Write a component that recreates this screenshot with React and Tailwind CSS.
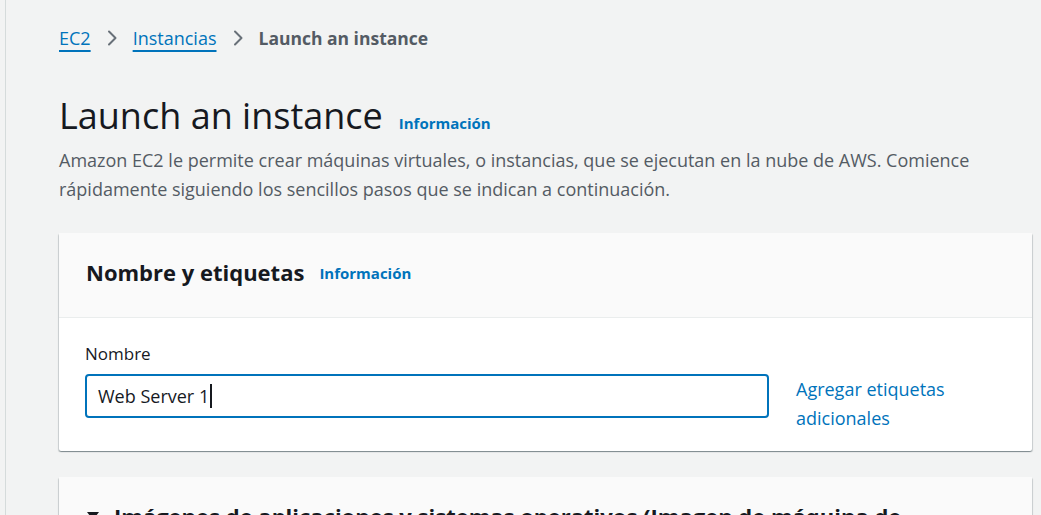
import React from 'react'

const font = { fontFamily: '"Open Sans", "Noto Sans", Arial, sans-serif' }

const Chevron = () => (
  <svg className="w-[14px] h-[18px] text-[#687078]" viewBox="0 0 14 18" fill="none" stroke="currentColor">
    <path d="M4 2.5l6.5 6.5L4 15.5" strokeWidth={2} strokeLinecap="round" strokeLinejoin="round" />
  </svg>
)

const Card = ({ children, className = '' }) => (
  <div className={`bg-white rounded-[2px] shadow-[0_1px_1px_0_rgba(0,28,36,0.3),1px_1px_1px_0_rgba(0,28,36,0.15),-1px_1px_1px_0_rgba(0,28,36,0.15)] ${className}`}>
    {children}
  </div>
)

export default function App() {
  return (
    <div className="flex h-[515px] overflow-hidden bg-[#f2f3f3]" style={font}>
      <div className="w-[5px] shrink-0" />
      <main className="flex-1 border-l border-[#d5dbdb] pl-[53px] pr-[9px]">
        {/* Breadcrumb */}
        <nav className="flex items-center gap-[14px] pt-[27px] text-[18px] leading-[22px]">
          <a className="text-[#0073bb] underline decoration-[1.5px] underline-offset-[5px]">EC2</a>
          <Chevron />
          <a className="text-[#0073bb] underline decoration-[1.5px] underline-offset-[5px]">Instancias</a>
          <Chevron />
          <span className="font-bold text-[17.5px] text-[#545b64]">Launch an instance</span>
        </nav>

        {/* Title */}
        <div className="mt-[45px] flex items-baseline gap-[16px]">
          <h1 className="text-[36px] leading-[44px] text-[#16191f] font-normal">Launch an instance</h1>
          <a className="text-[15px] font-bold text-[#0073bb]">Información</a>
        </div>
        <p className="mt-[8px] text-[18px] leading-[29px] text-[#545b64]">
          Amazon EC2 le permite crear máquinas virtuales, o instancias, que se ejecutan en la nube de AWS. Comience
          <br />
          rápidamente siguiendo los sencillos pasos que se indican a continuación.
        </p>

        {/* Nombre y etiquetas */}
        <Card className="mt-[29px]">
          <div className="bg-[#fafafa] border-b border-[#eaeded] h-[85px] px-[27px] pb-[6px] flex items-center gap-[15px]">
            <h2 className="text-[22px] font-bold text-[#16191f]">Nombre y etiquetas</h2>
            <a className="text-[15px] font-bold text-[#0073bb] mt-[3px]">Información</a>
          </div>
          <div className="px-[26px] pt-[24px] pb-[18px]">
            <label className="block text-[17px] leading-[24px] text-[#16191f]">Nombre</label>
            <div className="mt-[8px] flex items-start gap-[27px]">
              <div className="w-[684px] h-[44px] shrink-0 border-2 border-[#0073bb] rounded-[4px] px-[11px] flex items-center text-[18px] text-[#16191f]">
                Web Server 1
                <span className="inline-block w-[2px] h-[24px] bg-[#16191f] ml-[1px]" />
              </div>
              <a className="text-[18px] leading-[29px] text-[#0073bb] pt-[1px]">
                Agregar etiquetas
                <br />
                adicionales
              </a>
            </div>
          </div>
        </Card>

        {/* Imágenes de aplicaciones */}
        <Card className="mt-[26px]">
          <div className="bg-[#fafafa] px-[27px] pt-[24px] pb-[24px] flex items-start gap-[14px]">
            <svg className="w-[14px] h-[14px] mt-[8px] shrink-0 text-[#16191f]" viewBox="0 0 14 14" fill="currentColor">
              <path d="M1 3h12L7 11z" />
            </svg>
            <h2 className="text-[22px] leading-[30px] font-bold text-[#16191f]">
              Imágenes de aplicaciones y sistemas operativos (Imagen de máquina de
              <br />
              Amazon)
            </h2>
          </div>
        </Card>
      </main>
    </div>
  )
}
